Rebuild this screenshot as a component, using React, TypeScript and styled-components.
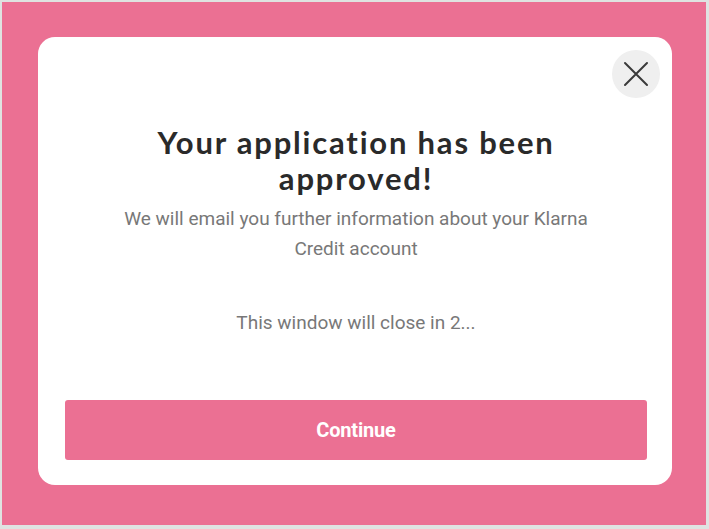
import React from "react";
import styled, { createGlobalStyle } from "styled-components";

const Global = createGlobalStyle`
  html, body { margin: 0; padding: 0; }
  body {
    background: #dfe3e1;
    width: 709px;
    height: 529px;
    overflow: hidden;
  }
  #root { padding: 2px 3px 4px 2px; box-sizing: border-box; width: 709px; height: 529px; }
`;

const Backdrop = styled.div`
  box-sizing: border-box;
  width: 704px;
  height: 523px;
  background: #eb7093;
  padding: 35px 33px 0 36px;
`;

const Card = styled.div`
  position: relative;
  box-sizing: border-box;
  width: 634px;
  height: 448px;
  background: #ffffff;
  border-radius: 17px;
  display: flex;
  flex-direction: column;
  align-items: center;
  padding: 87px 25px 25px 27px;
`;

const CloseButton = styled.button`
  position: absolute;
  top: 13px;
  right: 12px;
  width: 48px;
  height: 48px;
  border-radius: 50%;
  border: none;
  background: #efefef;
  display: flex;
  align-items: center;
  justify-content: center;
  padding: 0;
  cursor: pointer;
`;

const Title = styled.h1`
  margin: 0;
  width: 500px;
  text-align: center;
  font-family: "Lato", "Noto Sans", sans-serif;
  font-weight: 700;
  font-size: 31px;
  line-height: 36px;
  color: #2a2a2a;
  letter-spacing: 1.8px;
`;

const Message = styled.p<{ $gap?: number }>`
  margin: ${(p) => p.$gap ?? 0}px 0 0;
  width: 500px;
  text-align: center;
  font-family: "Roboto", "Liberation Sans", sans-serif;
  font-weight: 400;
  font-size: 19px;
  line-height: 30px;
  color: #787878;
`;

const Spacer = styled.div`
  flex: 1;
`;

const PrimaryButton = styled.button`
  width: 582px;
  height: 60px;
  border: none;
  border-radius: 3px;
  background: #eb7093;
  color: #ffffff;
  font-family: "Roboto", "Liberation Sans", sans-serif;
  font-weight: 700;
  font-size: 20px;
  letter-spacing: -0.2px;
  cursor: pointer;
`;

export default function App() {
  return (
    <>
      <Global />
      <Backdrop>
        <Card>
          <CloseButton aria-label="Close">
            <svg width="26" height="26" viewBox="0 0 26 26">
              <path d="M2 2 L24 24 M24 2 L2 24" stroke="#3a3a3a" strokeWidth="2" strokeLinecap="round" />
            </svg>
          </CloseButton>
          <Title>Your application has been approved!</Title>
          <Message $gap={8}>We will email you further information about your Klarna Credit account</Message>
          <Message $gap={44}>This window will close in 2...</Message>
          <Spacer />
          <PrimaryButton>Continue</PrimaryButton>
        </Card>
      </Backdrop>
    </>
  );
}
